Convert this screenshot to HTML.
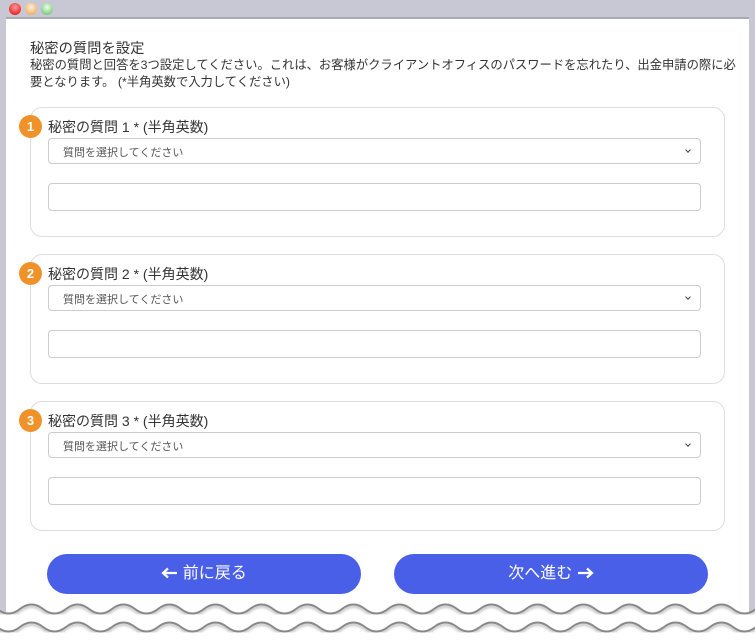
<!DOCTYPE html>
<html><head><meta charset="utf-8"><style>
*{box-sizing:border-box;margin:0;padding:0}
body{width:755px;height:640px;overflow:hidden;background:#fff;font-family:"Liberation Sans","Noto Sans CJK JP",sans-serif;position:relative;color:#333}
.frame{position:absolute;left:0;top:0;width:755px;height:612px;background:#c8c8d4}
.win{position:absolute;left:6px;top:17px;width:743px;height:600px;background:#fff;border-top:2px solid #a9a9b2}
.dot{position:absolute;top:3px;width:12px;height:12px;border-radius:50%}
h1{position:absolute;left:30px;top:37px;font-size:14.3px;font-weight:normal;color:#333}
.desc{position:absolute;left:30px;top:57px;font-size:12.3px;line-height:17px;color:#333;white-space:nowrap}
.card{position:absolute;left:30px;width:695px;height:130px;border:1px solid #ddd;border-radius:12px}
.badge{position:absolute;left:-12px;top:7px;width:23px;height:23px;border-radius:50%;background:#ef922a;color:#fff;font-weight:bold;font-size:13px;text-align:center;line-height:23px}
.lab{position:absolute;left:17px;top:9px;font-size:14px;color:#333}
.sel{position:absolute;left:17px;top:30px;width:653px;height:26px;border:1px solid #ccc;border-radius:4px;font-size:11px;color:#555;padding:5px 0 0 14px}
.sel:after{content:"";position:absolute;right:10px;top:9px;width:3px;height:3px;border-right:1.5px solid #444;border-bottom:1.5px solid #444;transform:rotate(45deg)}
.inp{position:absolute;left:17px;top:75px;width:653px;height:28px;border:1px solid #ccc;border-radius:4px}
.btn{position:absolute;top:554px;width:314px;height:40px;border-radius:20px;background:#4a5fe8;color:#fff;font-size:16px;text-align:center;line-height:40px}
.btn svg{vertical-align:-1px}
</style></head><body>
<div class="frame"></div>
<div class="dot" style="left:9px;background:radial-gradient(circle at 50% 35%,#f99,#d00)"></div>
<div class="dot" style="left:25px;background:radial-gradient(circle at 50% 35%,#fed,#e9a040)"></div>
<div class="dot" style="left:41px;background:radial-gradient(circle at 50% 35%,#efe,#5b5)"></div>
<div class="win"></div>
<h1>秘密の質問を設定</h1>
<div class="desc">秘密の質問と回答を3つ設定してください。これは、お客様がクライアントオフィスのパスワードを忘れたり、出金申請の際に必<br>要となります。 (*半角英数で入力してください)</div>
<div class="card" style="top:107px"><div class="badge">1</div><div class="lab">秘密の質問 1 * (半角英数)</div><div class="sel">質問を選択してください</div><div class="inp"></div></div>
<div class="card" style="top:254px"><div class="badge">2</div><div class="lab">秘密の質問 2 * (半角英数)</div><div class="sel">質問を選択してください</div><div class="inp"></div></div>
<div class="card" style="top:401px"><div class="badge">3</div><div class="lab">秘密の質問 3 * (半角英数)</div><div class="sel">質問を選択してください</div><div class="inp"></div></div>
<div class="btn" style="left:47px"><svg width="17" height="12" viewBox="0 0 17 12"><path d="M16 6H3M7 1.5L2 6l5 4.5" fill="none" stroke="#fff" stroke-width="2.2"/></svg> 前に戻る</div>
<div class="btn" style="left:394px">次へ進む <svg width="17" height="12" viewBox="0 0 17 12"><path d="M1 6h13M10 1.5L15 6l-5 4.5" fill="none" stroke="#fff" stroke-width="2.2"/></svg></div>
<svg style="position:absolute;left:0;top:596px" width="755" height="44">
<defs><filter id="s"><feDropShadow dx="0" dy="2" stdDeviation="1.2" flood-color="#000" flood-opacity="0.3"/></filter>
<path id="w" d="M-26 13 q11.5 -9 23 0 t23 0 t23 0 t23 0 t23 0 t23 0 t23 0 t23 0 t23 0 t23 0 t23 0 t23 0 t23 0 t23 0 t23 0 t23 0 t23 0 t23 0 t23 0 t23 0 t23 0 t23 0 t23 0 t23 0 t23 0 t23 0 t23 0 t23 0 t23 0 t23 0 t23 0 t23 0 t23 0 t23 0 t23 0 t23 0 t23 0 t23 0"/></defs>
<path d="M-26 13 q11.5 -9 23 0 t23 0 t23 0 t23 0 t23 0 t23 0 t23 0 t23 0 t23 0 t23 0 t23 0 t23 0 t23 0 t23 0 t23 0 t23 0 t23 0 t23 0 t23 0 t23 0 t23 0 t23 0 t23 0 t23 0 t23 0 t23 0 t23 0 t23 0 t23 0 t23 0 t23 0 t23 0 t23 0 t23 0 t23 0 t23 0 t23 0 t23 0 L760 44 L-26 44Z" fill="#fff"/>
<use href="#w" fill="none" stroke="#888" stroke-width="2" filter="url(#s)"/>
<use href="#w" y="18" fill="none" stroke="#888" stroke-width="2" filter="url(#s)"/>
</svg>
</body></html>
